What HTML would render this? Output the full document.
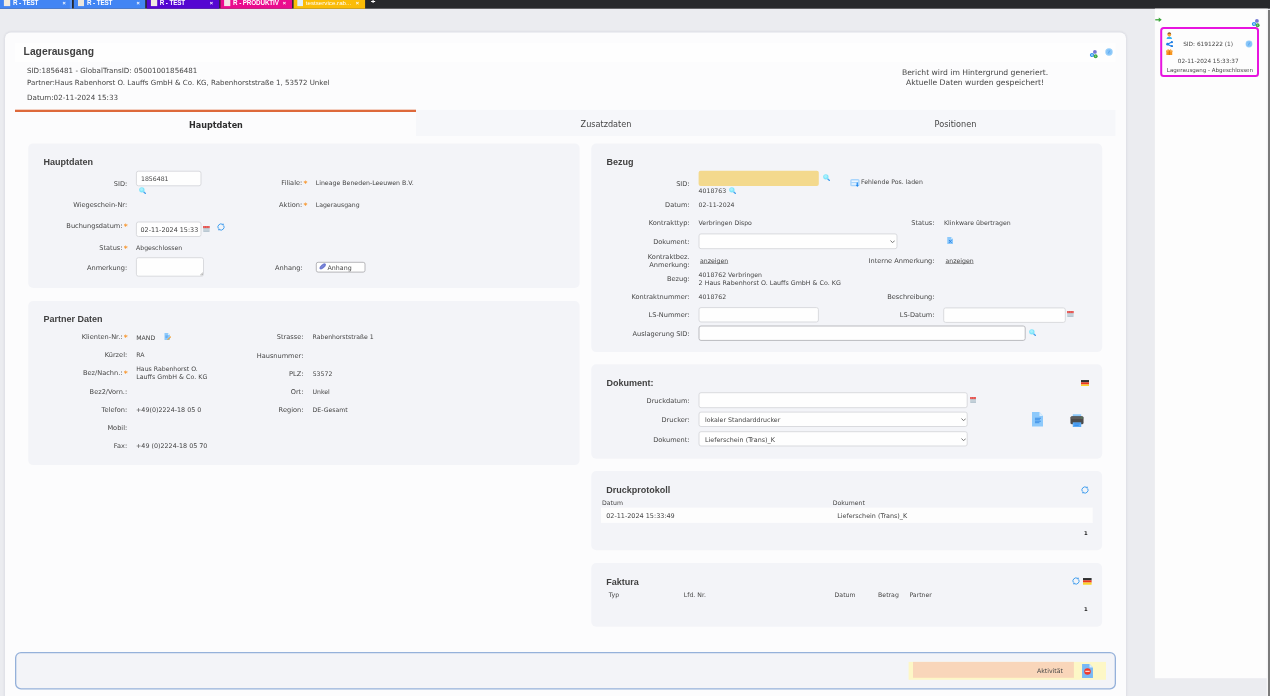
<!DOCTYPE html>
<html lang="de"><head><meta charset="utf-8"><title>Lagerausgang</title>
<style>
html,body{margin:0;padding:0;}
body{width:1270px;height:696px;overflow:hidden;background:#ebecf0;position:relative;font-family:'DejaVu Sans','Liberation Sans',sans-serif;color:#454545;}
#root{position:absolute;left:0;top:0;width:1270px;height:696px;overflow:hidden;will-change:transform;}
.a{position:absolute;display:block;}
.t{position:absolute;white-space:nowrap;line-height:12px;height:12px;}
.st{color:#f8962d;font-weight:bold;font-size:7.5px;line-height:0;margin-left:1.2px;position:relative;top:0.5px;}
u{text-decoration:underline;text-decoration-thickness:1px;text-underline-offset:0.3px;text-decoration-color:rgba(70,70,70,0.5);text-decoration-skip-ink:none;}
</style></head>
<body>
<div id="root">
<svg class="a" style="left:0;top:0" width="1270" height="696" viewBox="0 0 1270 696">
<rect x="0.00" y="0.00" width="1270.00" height="8.70" fill="#28292c"/>
<rect x="0.00" y="0.00" width="72.00" height="8.70" fill="#4285f4"/>
<rect x="3.90" y="0.00" width="6.30" height="6.10" fill="#f1ebe0"/>
<rect x="73.80" y="0.00" width="71.40" height="8.70" fill="#4285f4"/>
<rect x="78.00" y="0.00" width="6.00" height="6.10" fill="#ece6dc"/>
<rect x="146.80" y="0.00" width="72.40" height="8.70" fill="#5506d2"/>
<rect x="150.90" y="0.00" width="6.30" height="6.10" fill="#f1ebe0"/>
<rect x="220.50" y="0.00" width="71.60" height="8.70" fill="#ea0b8e"/>
<rect x="224.10" y="0.00" width="6.20" height="6.10" fill="#f3e3e6"/>
<rect x="293.60" y="0.00" width="71.50" height="8.70" fill="#fbbc07"/>
<rect x="297.30" y="0.00" width="5.70" height="6.10" fill="#dfeefc"/>
<rect x="69.80" y="0.00" width="2.20" height="8.70" fill="#5b95f6"/>
<rect x="1154.90" y="8.60" width="111.90" height="669.60" fill="#fdfdfd"/>
<rect x="1267.80" y="10.00" width="2.20" height="690.00" fill="#7b7b7b"/>
<rect x="1266.80" y="8.60" width="1.00" height="690.00" fill="#ffffff"/>
<rect x="1161.20" y="28.00" width="96.80" height="48.00" rx="2.50" fill="#fdfdfd" stroke="#e714df" stroke-width="2.0"/>
<rect x="2.60" y="30.00" width="1125.80" height="704.80" rx="8.40" fill="rgba(40,50,80,0.012)"/>
<rect x="3.40" y="30.80" width="1124.20" height="703.20" rx="7.60" fill="rgba(40,50,80,0.018)"/>
<rect x="4.20" y="31.60" width="1122.60" height="701.60" rx="6.80" fill="rgba(40,50,80,0.025)"/>
<rect x="5.00" y="32.40" width="1121.00" height="700.00" rx="6.00" fill="#fcfcfd"/>
<rect x="15.00" y="42.80" width="1100.40" height="19.00" fill="#fefefe"/>
<rect x="416.00" y="109.90" width="699.40" height="26.00" fill="#f6f7fa"/>
<rect x="15.00" y="109.70" width="401.00" height="2.30" fill="#de693b"/>
<rect x="28.20" y="143.40" width="551.40" height="144.60" rx="5.00" fill="#f3f4f8"/>
<rect x="136.40" y="171.20" width="64.60" height="14.60" rx="2.00" fill="#fefefe" stroke="#d9dade" stroke-width="1.0"/>
<rect x="136.40" y="222.00" width="64.60" height="14.50" rx="2.00" fill="#fefefe" stroke="#d9dade" stroke-width="1.0"/>
<rect x="136.40" y="257.70" width="67.10" height="18.50" rx="2.00" fill="#fefefe" stroke="#d9dade" stroke-width="1.0"/>
<rect x="316.30" y="262.30" width="48.70" height="9.80" rx="1.80" fill="#fefefe" stroke="#a6a6aa" stroke-width="0.8"/>
<rect x="28.20" y="301.10" width="551.40" height="164.00" rx="5.00" fill="#f3f4f8"/>
<rect x="591.30" y="143.50" width="510.90" height="208.60" rx="5.00" fill="#f3f4f8"/>
<rect x="698.60" y="170.70" width="120.20" height="15.40" rx="2.00" fill="#f3d98d"/>
<rect x="699.00" y="233.90" width="198.00" height="14.80" rx="2.00" fill="#fefefe" stroke="#d9dade" stroke-width="1.0"/>
<rect x="699.00" y="307.60" width="119.40" height="14.40" rx="2.00" fill="#fefefe" stroke="#d9dade" stroke-width="1.0"/>
<rect x="943.70" y="307.90" width="121.60" height="14.50" rx="2.00" fill="#fefefe" stroke="#d9dade" stroke-width="1.0"/>
<rect x="699.00" y="326.00" width="326.20" height="14.40" rx="2.00" fill="#fefefe" stroke="#b9babf" stroke-width="1.0"/>
<rect x="591.30" y="364.20" width="510.90" height="94.50" rx="5.00" fill="#f3f4f8"/>
<rect x="699.00" y="392.70" width="268.20" height="15.00" rx="2.00" fill="#fefefe" stroke="#d9dade" stroke-width="1.0"/>
<rect x="699.00" y="412.10" width="268.20" height="14.40" rx="2.00" fill="#fefefe" stroke="#d9dade" stroke-width="1.0"/>
<rect x="699.00" y="431.70" width="268.20" height="14.30" rx="2.00" fill="#fefefe" stroke="#d9dade" stroke-width="1.0"/>
<rect x="591.30" y="471.10" width="510.80" height="79.20" rx="5.00" fill="#f3f4f8"/>
<rect x="601.00" y="507.60" width="491.70" height="15.30" fill="#fdfdfd"/>
<rect x="591.30" y="563.00" width="510.80" height="63.80" rx="5.00" fill="#f3f4f8"/>
<rect x="15.65" y="652.55" width="1099.70" height="36.30" rx="5.35" fill="#f3f4f8" stroke="#95b1da" stroke-width="1.3"/>
<rect x="908.60" y="661.90" width="197.40" height="17.90" fill="#fdf7c6"/>
<rect x="913.00" y="661.90" width="160.90" height="15.90" fill="#f9d6ba"/>
</svg>
<div class="t" style="top:-3px;font-size:6.3px;font-family:'Liberation Sans','DejaVu Sans',sans-serif;font-weight:bold;color:#ffffff;letter-spacing:-0.12px;left:13.0px;">R - TEST</div>
<div class="t" style="top:-3px;font-size:5.6px;font-family:'Liberation Sans','DejaVu Sans',sans-serif;font-weight:bold;color:#ffffff;left:62.6px;">×</div>
<div class="t" style="top:-3px;font-size:6.3px;font-family:'Liberation Sans','DejaVu Sans',sans-serif;font-weight:bold;color:#ffffff;letter-spacing:-0.12px;left:87.0px;">R - TEST</div>
<div class="t" style="top:-3px;font-size:5.6px;font-family:'Liberation Sans','DejaVu Sans',sans-serif;font-weight:bold;color:#ffffff;left:136.6px;">×</div>
<div class="t" style="top:-3px;font-size:6.3px;font-family:'Liberation Sans','DejaVu Sans',sans-serif;font-weight:bold;color:#ffffff;letter-spacing:-0.12px;left:159.8px;">R - TEST</div>
<div class="t" style="top:-3px;font-size:5.6px;font-family:'Liberation Sans','DejaVu Sans',sans-serif;font-weight:bold;color:#ffffff;left:209.8px;">×</div>
<div class="t" style="top:-3px;font-size:6.3px;font-family:'Liberation Sans','DejaVu Sans',sans-serif;font-weight:bold;color:#ffffff;letter-spacing:-0.12px;left:233.1px;">R - PRODUKTIV</div>
<div class="t" style="top:-3px;font-size:5.6px;font-family:'Liberation Sans','DejaVu Sans',sans-serif;font-weight:bold;color:#ffffff;left:282.79999999999995px;">×</div>
<div class="t" style="top:-3px;font-size:6.19px;font-family:'Liberation Sans','DejaVu Sans',sans-serif;color:#ffffff;left:305.8px;">testservice.rab...</div>
<div class="t" style="top:-3px;font-size:5.6px;font-family:'Liberation Sans','DejaVu Sans',sans-serif;font-weight:bold;color:#ffffff;left:355.79999999999995px;">×</div>
<div class="t" style="top:-4px;font-size:8px;font-family:'Liberation Sans','DejaVu Sans',sans-serif;font-weight:bold;color:#ffffff;left:370.8px;">+</div>
<svg class="a" style="left:1155.4px;top:16.6px" width="7" height="5.6" viewBox="0 0 14 11"><path d="M0.5 5.5H10" stroke="#3aa53a" stroke-width="2.6"/><path d="M7.5 1L13.5 5.5L7.5 10Z" fill="#3aa53a"/></svg>
<svg class="a" style="left:1250.6px;top:17.8px" width="9" height="10" viewBox="0 0 9 10"><circle cx="5.9" cy="2.9" r="1.9" fill="#7377d4"/><circle cx="3" cy="6" r="1.45" fill="none" stroke="#2f95f0" stroke-width="1.3"/><circle cx="6.6" cy="7.2" r="2" fill="#3fa846"/><circle cx="6.6" cy="7.2" r="0.6" fill="#9ad79c"/></svg>
<div class="t" style="top:38px;font-size:5.85px;color:#4a4a4a;left:908.1px;width:600px;text-align:center;">SID: 6191222 (1)</div>
<div class="t" style="top:55px;font-size:5.73px;color:#4a4a4a;left:908.2px;width:600px;text-align:center;">02-11-2024 15:33:37</div>
<div class="t" style="top:64px;font-size:5.54px;color:#4a4a4a;left:909.9px;width:600px;text-align:center;">Lagerausgang - Abgeschlossen</div>
<svg class="a" style="left:1245.1px;top:39.9px" width="8" height="8" viewBox="0 0 8 8"><circle cx="4" cy="4" r="3.4" fill="#96cefa"/><circle cx="4" cy="4" r="2.1" fill="none" stroke="#6fb6f5" stroke-width="0.6"/><path d="M4 1.8L4.8 4.3L3.7 4.3Z M4 6.2L3.2 3.7L4.3 3.7Z" fill="#3d97ec"/></svg>
<svg class="a" style="left:1166px;top:32px" width="7" height="7" viewBox="0 0 7 7"><path d="M0.5 6.9Q0.6 4.6 3.3 4.5Q6 4.6 6.1 6.9Z" fill="#38b3f4"/><circle cx="3.3" cy="2.5" r="1.85" fill="#f6a62c"/><path d="M1.4 2.3Q1.5 0.3 3.3 0.3Q5.1 0.3 5.2 2.3Q3.3 1.2 1.4 2.3Z" fill="#8a5a2c"/><path d="M2.6 4.4L3.3 5.3L4 4.4Z" fill="#f6a62c"/></svg>
<svg class="a" style="left:1166px;top:41px" width="7.4" height="6.4" viewBox="0 0 15 13"><path d="M3 6.5L12 2M3 6.5L12 11" stroke="#1f7fe5" stroke-width="2.2"/><circle cx="3.2" cy="6.5" r="2.9" fill="#1f7fe5"/><circle cx="12" cy="2.4" r="2.3" fill="#1f7fe5"/><circle cx="12" cy="10.6" r="2.3" fill="#1f7fe5"/></svg>
<svg class="a" style="left:1166.3px;top:48.8px" width="6.6" height="6.4" viewBox="0 0 13 13"><rect x="0.5" y="3.4" width="12" height="9.4" fill="#f7941d"/><rect x="0" y="3" width="13" height="3" fill="#f9a63a"/><rect x="5.4" y="3" width="2.2" height="10" fill="#d9730b"/><path d="M6.5 3Q3 -1 2.6 2.4ZM6.5 3Q10 -1 10.4 2.4Z" stroke="#f7941d" stroke-width="1.2" fill="none"/></svg>
<div class="t" style="top:46px;font-size:10.3px;font-family:'Liberation Sans','DejaVu Sans',sans-serif;font-weight:bold;color:#414141;left:23.6px;">Lagerausgang</div>
<div class="t" style="top:65px;font-size:7.12px;left:27px;">SID:1856481 - GlobalTransID: 05001001856481</div>
<div class="t" style="top:77px;font-size:7.05px;left:27px;">Partner:Haus Rabenhorst O. Lauffs GmbH &amp; Co. KG, Rabenhorststraße 1, 53572 Unkel</div>
<div class="t" style="top:92px;font-size:7.17px;left:27px;">Datum:02-11-2024 15:33</div>
<div class="t" style="top:67px;font-size:7.65px;left:675.1px;width:600px;text-align:center;">Bericht wird im Hintergrund generiert.</div>
<div class="t" style="top:77px;font-size:7.65px;left:675.1px;width:600px;text-align:center;">Aktuelle Daten wurden gespeichert!</div>
<svg class="a" style="left:1089px;top:48.65px" width="9" height="10" viewBox="0 0 9 10"><circle cx="5.9" cy="2.9" r="1.9" fill="#7377d4"/><circle cx="3" cy="6" r="1.45" fill="none" stroke="#2f95f0" stroke-width="1.3"/><circle cx="6.6" cy="7.2" r="2" fill="#3fa846"/><circle cx="6.6" cy="7.2" r="0.6" fill="#9ad79c"/></svg>
<svg class="a" style="left:1104.6px;top:48px" width="8" height="8" viewBox="0 0 8 8"><circle cx="4" cy="4" r="3.7" fill="#96cefa"/><circle cx="4" cy="4" r="2.1" fill="none" stroke="#6fb6f5" stroke-width="0.6"/><path d="M4 1.8L4.8 4.3L3.7 4.3Z M4 6.2L3.2 3.7L4.3 3.7Z" fill="#3d97ec"/></svg>
<div class="t" style="top:119px;font-size:8.08px;font-weight:bold;color:#2e2e2e;left:-84.1px;width:600px;text-align:center;">Hauptdaten</div>
<div class="t" style="top:118px;font-size:8.13px;left:306px;width:600px;text-align:center;">Zusatzdaten</div>
<div class="t" style="top:118px;font-size:8.13px;left:655.5px;width:600px;text-align:center;">Positionen</div>
<div class="t" style="top:156px;font-size:9px;font-family:'Liberation Sans','DejaVu Sans',sans-serif;font-weight:bold;color:#414141;left:43.6px;">Hauptdaten</div>
<div class="t" style="top:178px;font-size:6.6px;right:1142.8px;">SID:</div>
<div class="t" style="top:173px;font-size:6.2px;left:141px;">1856481</div>
<svg class="a" style="left:138.8px;top:187.05px" width="7.2" height="7.2" viewBox="0 0 7.2 7.2"><path d="M4.6 4.8L6.5 6.6" stroke="#4aa3ee" stroke-width="1.3" stroke-linecap="round"/><circle cx="2.85" cy="2.85" r="2.7" fill="#80e5fb"/><circle cx="2.6" cy="2.6" r="1.5" fill="#a8effd"/></svg>
<div class="t" style="top:199px;font-size:6.6px;right:1142.8px;">Wiegeschein-Nr:</div>
<div class="t" style="top:220px;font-size:6.6px;right:1142.4px;">Buchungsdatum:<b class="st">*</b></div>
<div class="t" style="top:224px;font-size:6.42px;left:140.5px;">02-11-2024 15:33</div>
<svg class="a" style="left:203.15px;top:225.65px" width="6.8" height="6" viewBox="0 0 6.8 6"><rect x="0.1" y="0" width="6.6" height="2.3" fill="#e4504c"/><rect x="0.3" y="2.3" width="6.2" height="3.6" fill="#b0c0cb"/><path d="M0.3 3.5H6.5M0.3 4.7H6.5" stroke="#d9e2e8" stroke-width="0.55"/><path d="M1.6 0.5V1.5M3.4 0.5V1.5M5.2 0.5V1.5" stroke="#f3a3a0" stroke-width="0.6"/></svg>
<svg class="a" style="left:216.9px;top:223.15px" width="8" height="8" viewBox="0 0 8 8"><path d="M1.32 5.55A3.1 3.1 0 0 1 5.55 1.32" fill="none" stroke="#3f9ff0" stroke-width="1"/><path d="M6.68 2.45A3.1 3.1 0 0 1 2.45 6.68" fill="none" stroke="#3f9ff0" stroke-width="1"/><path d="M6.9 2.1L6.1 0.3L4.9 2.3Z" fill="#2f8fe8"/><path d="M1.1 5.9L1.9 7.7L3.1 5.7Z" fill="#2f8fe8"/></svg>
<div class="t" style="top:242px;font-size:6.6px;right:1142.4px;">Status:<b class="st">*</b></div>
<div class="t" style="top:242px;font-size:6.2px;left:136px;">Abgeschlossen</div>
<div class="t" style="top:262px;font-size:6.6px;right:1142.8px;">Anmerkung:</div>
<svg class="a" style="left:199.9px;top:272.4px" width="3.6" height="3.6" viewBox="0 0 7 7"><path d="M6.5 0.5L0.5 6.5M6.5 3.6L3.6 6.5" stroke="#6f6f6f" stroke-width="1.1"/></svg>
<div class="t" style="top:177px;font-size:6.6px;right:962.6px;">Filiale:<b class="st">*</b></div>
<div class="t" style="top:177px;font-size:6.24px;left:315.7px;">Lineage Beneden-Leeuwen B.V.</div>
<div class="t" style="top:199px;font-size:6.6px;right:962.6px;">Aktion:<b class="st">*</b></div>
<div class="t" style="top:199px;font-size:6.2px;left:315.7px;">Lagerausgang</div>
<div class="t" style="top:262px;font-size:6.6px;right:967.4px;">Anhang:</div>
<svg class="a" style="left:318.8px;top:263.4px" width="7.4" height="6.8" viewBox="0 0 7.4 6.8"><ellipse cx="3.7" cy="3.4" rx="3.9" ry="1.9" transform="rotate(-42 3.7 3.4)" fill="#6e7ad2"/><path d="M2.2 4.6L5 2.2" stroke="#98a1e2" stroke-width="0.5"/></svg>
<div class="t" style="top:262px;font-size:6.3px;left:327.5px;">Anhang</div>
<div class="t" style="top:313px;font-size:9px;font-family:'Liberation Sans','DejaVu Sans',sans-serif;font-weight:bold;color:#414141;left:43.5px;">Partner Daten</div>
<div class="t" style="top:331px;font-size:6.6px;right:1142.4px;">Klienten-Nr.:<b class="st">*</b></div>
<div class="t" style="top:332px;font-size:6.2px;left:136.2px;">MAND</div>
<div class="t" style="top:349px;font-size:6.6px;right:1142.8px;">Kürzel:</div>
<div class="t" style="top:349px;font-size:6.2px;left:136.2px;">RA</div>
<div class="t" style="top:367px;font-size:6.6px;right:1142.4px;">Bez/Nachn.:<b class="st">*</b></div>
<div class="t" style="top:363px;font-size:6.2px;left:136.2px;">Haus Rabenhorst O.</div>
<div class="t" style="top:371px;font-size:6.34px;left:136.2px;">Lauffs GmbH &amp; Co. KG</div>
<div class="t" style="top:386px;font-size:6.6px;right:1142.8px;">Bez2/Vorn.:</div>
<div class="t" style="top:404px;font-size:6.6px;right:1142.8px;">Telefon:</div>
<div class="t" style="top:404px;font-size:6.39px;left:136px;">+49(0)2224-18 05 0</div>
<div class="t" style="top:422px;font-size:6.6px;right:1142.8px;">Mobil:</div>
<div class="t" style="top:440px;font-size:6.6px;right:1142.8px;">Fax:</div>
<div class="t" style="top:440px;font-size:6.39px;left:136px;">+49 (0)2224-18 05 70</div>
<div class="t" style="top:331px;font-size:6.6px;right:966.6px;">Strasse:</div>
<div class="t" style="top:331px;font-size:6.2px;left:312.5px;">Rabenhorststraße 1</div>
<div class="t" style="top:350px;font-size:6.6px;right:966.6px;">Hausnummer:</div>
<div class="t" style="top:368px;font-size:6.6px;right:966.6px;">PLZ:</div>
<div class="t" style="top:368px;font-size:6.2px;left:312.7px;">53572</div>
<div class="t" style="top:386px;font-size:6.6px;right:966.6px;">Ort:</div>
<div class="t" style="top:386px;font-size:6.2px;left:312.5px;">Unkel</div>
<div class="t" style="top:404px;font-size:6.6px;right:966.6px;">Region:</div>
<div class="t" style="top:404px;font-size:6.2px;left:312.5px;">DE-Gesamt</div>
<svg class="a" style="left:164px;top:332.6px" width="7.4" height="7.6" viewBox="0 0 15 15"><path d="M1 0H8L12 4V15H1Z" fill="#8dc9fb"/><path d="M8 0L12 4H8Z" fill="#d6ecfd"/><path d="M7 12.5L13.4 6.2L15 7.8L8.6 14L6.6 14.4Z" fill="#f2a33a"/><path d="M3 6H8M3 8.5H7" stroke="#3d8fe6" stroke-width="1.2"/></svg>
<div class="t" style="top:156px;font-size:9px;font-family:'Liberation Sans','DejaVu Sans',sans-serif;font-weight:bold;color:#414141;left:606.4px;">Bezug</div>
<div class="t" style="top:178px;font-size:6.6px;right:580.4px;">SID:</div>
<svg class="a" style="left:823px;top:174.1px" width="7.2" height="7.2" viewBox="0 0 7.2 7.2"><path d="M4.6 4.8L6.5 6.6" stroke="#4aa3ee" stroke-width="1.3" stroke-linecap="round"/><circle cx="2.85" cy="2.85" r="2.7" fill="#80e5fb"/><circle cx="2.6" cy="2.6" r="1.5" fill="#a8effd"/></svg>
<svg class="a" style="left:850.2px;top:178.6px" width="10" height="8.2" viewBox="0 0 10 8.2"><rect x="0.2" y="0.1" width="9.4" height="7.2" rx="1.6" fill="#a9d5fc"/><rect x="1.6" y="1.5" width="6.6" height="1.4" fill="#f4faff"/><rect x="1.6" y="4.3" width="4.6" height="1.4" fill="#f4faff"/><path d="M7.3 3.6V6.8" stroke="#1f86ee" stroke-width="1.1"/><path d="M5.9 6.1H8.7L7.3 8Z" fill="#1f86ee"/></svg>
<div class="t" style="top:176px;font-size:6.19px;left:861.1px;">Fehlende Pos. laden</div>
<div class="t" style="top:185px;font-size:6.2px;left:698.6px;">4018763</div>
<svg class="a" style="left:728.9px;top:187.2px" width="7.2" height="7.2" viewBox="0 0 7.2 7.2"><path d="M4.6 4.8L6.5 6.6" stroke="#4aa3ee" stroke-width="1.3" stroke-linecap="round"/><circle cx="2.85" cy="2.85" r="2.7" fill="#80e5fb"/><circle cx="2.6" cy="2.6" r="1.5" fill="#a8effd"/></svg>
<div class="t" style="top:199px;font-size:6.6px;right:580.4px;">Datum:</div>
<div class="t" style="top:199px;font-size:6.2px;left:698.6px;">02-11-2024</div>
<div class="t" style="top:217px;font-size:6.6px;right:580.4px;">Kontrakttyp:</div>
<div class="t" style="top:217px;font-size:6.2px;left:698.6px;">Verbringen Dispo</div>
<div class="t" style="top:217px;font-size:6.6px;right:335.5px;">Status:</div>
<div class="t" style="top:217px;font-size:6.19px;left:944px;">Klinkware übertragen</div>
<div class="t" style="top:236px;font-size:6.6px;right:580.4px;">Dokument:</div>
<svg class="a" style="left:889.9px;top:239.9px" width="5.2" height="3.4" viewBox="0 0 5.2 3.4"><path d="M0.5 0.6L2.6 2.7L4.7 0.6" fill="none" stroke="#6a6a6a" stroke-width="0.95"/></svg>
<svg class="a" style="left:946.8px;top:237px" width="6.4" height="7.4" viewBox="0 0 13 15"><path d="M0.5 0H8.5L12.5 4V15H0.5Z" fill="#8dc9fb"/><path d="M8.5 0L12.5 4H8.5Z" fill="#d6ecfd"/><path d="M4 6L9.4 12M9.4 6L4 12" stroke="#2f86e4" stroke-width="2"/></svg>
<div class="t" style="top:251px;font-size:6.6px;right:580.4px;">Kontraktbez.</div>
<div class="t" style="top:259px;font-size:6.6px;right:580.4px;">Anmerkung:</div>
<div class="t" style="top:255px;font-size:6.2px;left:700px;"><u>anzeigen</u></div>
<div class="t" style="top:255px;font-size:6.6px;right:335.5px;">Interne Anmerkung:</div>
<div class="t" style="top:255px;font-size:6.2px;left:945.5px;"><u>anzeigen</u></div>
<div class="t" style="top:273px;font-size:6.6px;right:580.4px;">Bezug:</div>
<div class="t" style="top:269px;font-size:6.2px;left:698.6px;">4018762 Verbringen</div>
<div class="t" style="top:277px;font-size:6.34px;left:698.6px;">2 Haus Rabenhorst O. Lauffs GmbH &amp; Co. KG</div>
<div class="t" style="top:291px;font-size:6.6px;right:580.4px;">Kontraktnummer:</div>
<div class="t" style="top:291px;font-size:6.2px;left:698.6px;">4018762</div>
<div class="t" style="top:291px;font-size:6.6px;right:335.5px;">Beschreibung:</div>
<div class="t" style="top:309px;font-size:6.6px;right:580.4px;">LS-Nummer:</div>
<div class="t" style="top:309px;font-size:6.6px;right:335.5px;">LS-Datum:</div>
<svg class="a" style="left:1067.3px;top:311.4px" width="6.8" height="6" viewBox="0 0 6.8 6"><rect x="0.1" y="0" width="6.6" height="2.3" fill="#e4504c"/><rect x="0.3" y="2.3" width="6.2" height="3.6" fill="#b0c0cb"/><path d="M0.3 3.5H6.5M0.3 4.7H6.5" stroke="#d9e2e8" stroke-width="0.55"/><path d="M1.6 0.5V1.5M3.4 0.5V1.5M5.2 0.5V1.5" stroke="#f3a3a0" stroke-width="0.6"/></svg>
<div class="t" style="top:328px;font-size:6.6px;right:580.4px;">Auslagerung SID:</div>
<svg class="a" style="left:1028.5px;top:328.6px" width="7.2" height="7.2" viewBox="0 0 7.2 7.2"><path d="M4.6 4.8L6.5 6.6" stroke="#4aa3ee" stroke-width="1.3" stroke-linecap="round"/><circle cx="2.85" cy="2.85" r="2.7" fill="#80e5fb"/><circle cx="2.6" cy="2.6" r="1.5" fill="#a8effd"/></svg>
<div class="t" style="top:377px;font-size:9px;font-family:'Liberation Sans','DejaVu Sans',sans-serif;font-weight:bold;color:#414141;left:606.4px;">Dokument:</div>
<svg class="a" style="left:1080.6px;top:379.6px" width="8.6" height="6.8" viewBox="0 0 9 7"><rect width="9" height="2.4" fill="#2e2e2e"/><rect y="2.4" width="9" height="2.3" fill="#ec371d"/><rect y="4.7" width="9" height="2.3" fill="#fad52b"/></svg>
<div class="t" style="top:395px;font-size:6.6px;right:580.4px;">Druckdatum:</div>
<svg class="a" style="left:969.5px;top:396.5px" width="6.8" height="6" viewBox="0 0 6.8 6"><rect x="0.1" y="0" width="6.6" height="2.3" fill="#e4504c"/><rect x="0.3" y="2.3" width="6.2" height="3.6" fill="#b0c0cb"/><path d="M0.3 3.5H6.5M0.3 4.7H6.5" stroke="#d9e2e8" stroke-width="0.55"/><path d="M1.6 0.5V1.5M3.4 0.5V1.5M5.2 0.5V1.5" stroke="#f3a3a0" stroke-width="0.6"/></svg>
<div class="t" style="top:414px;font-size:6.6px;right:580.4px;">Drucker:</div>
<div class="t" style="top:414px;font-size:6.28px;left:704.9px;">lokaler Standarddrucker</div>
<svg class="a" style="left:960.9px;top:418.09999999999997px" width="5.2" height="3.4" viewBox="0 0 5.2 3.4"><path d="M0.5 0.6L2.6 2.7L4.7 0.6" fill="none" stroke="#6a6a6a" stroke-width="0.95"/></svg>
<div class="t" style="top:434px;font-size:6.6px;right:580.4px;">Dokument:</div>
<div class="t" style="top:434px;font-size:6.4px;left:704.9px;">Lieferschein (Trans)_K</div>
<svg class="a" style="left:960.9px;top:437.7px" width="5.2" height="3.4" viewBox="0 0 5.2 3.4"><path d="M0.5 0.6L2.6 2.7L4.7 0.6" fill="none" stroke="#6a6a6a" stroke-width="0.95"/></svg>
<svg class="a" style="left:1031.9px;top:412.2px" width="11.4" height="14.5" viewBox="0 0 23 29"><path d="M0 0H15L23 8V29H0Z" fill="#8dc9fb"/><path d="M15 0L23 8H15Z" fill="#dbeefe"/><path d="M6 12.5H18M6 15.5H16M6 18.5H18M6 21.5H15" stroke="#3d8fe6" stroke-width="2"/></svg>
<svg class="a" style="left:1070.3px;top:413.5px" width="14" height="13.4" viewBox="0 0 28 27"><rect x="5.5" y="0.5" width="17" height="7" fill="#8dc9fb"/><rect x="0.8" y="4.6" width="26.4" height="16" rx="3.2" fill="#4b4b4b"/><rect x="1.2" y="5" width="25.6" height="5" rx="2.5" fill="#5c5c5c"/><circle cx="23.6" cy="7.8" r="1.1" fill="#39a845"/><rect x="5.5" y="16.8" width="17" height="9.8" fill="#5aaaf6"/><path d="M8.5 20H19.5M8.5 23H17.5" stroke="#2f86e4" stroke-width="1.6"/></svg>
<div class="t" style="top:484px;font-size:9px;font-family:'Liberation Sans','DejaVu Sans',sans-serif;font-weight:bold;color:#414141;left:606.2px;">Druckprotokoll</div>
<svg class="a" style="left:1080.6px;top:485.9px" width="8" height="8" viewBox="0 0 8 8"><path d="M1.32 5.55A3.1 3.1 0 0 1 5.55 1.32" fill="none" stroke="#3f9ff0" stroke-width="1"/><path d="M6.68 2.45A3.1 3.1 0 0 1 2.45 6.68" fill="none" stroke="#3f9ff0" stroke-width="1"/><path d="M6.9 2.1L6.1 0.3L4.9 2.3Z" fill="#2f8fe8"/><path d="M1.1 5.9L1.9 7.7L3.1 5.7Z" fill="#2f8fe8"/></svg>
<div class="t" style="top:497px;font-size:6.2px;left:602px;">Datum</div>
<div class="t" style="top:497px;font-size:6.2px;left:832.8px;">Dokument</div>
<div class="t" style="top:510px;font-size:6.46px;left:606.2px;">02-11-2024 15:33:49</div>
<div class="t" style="top:510px;font-size:6.4px;left:837.2px;">Lieferschein (Trans)_K</div>
<div class="t" style="top:527px;font-size:5.3px;font-weight:bold;color:#222;left:1084px;">1</div>
<div class="t" style="top:576px;font-size:9px;font-family:'Liberation Sans','DejaVu Sans',sans-serif;font-weight:bold;color:#414141;left:606.2px;">Faktura</div>
<svg class="a" style="left:1072.4px;top:577.1px" width="8" height="8" viewBox="0 0 8 8"><path d="M1.32 5.55A3.1 3.1 0 0 1 5.55 1.32" fill="none" stroke="#3f9ff0" stroke-width="1"/><path d="M6.68 2.45A3.1 3.1 0 0 1 2.45 6.68" fill="none" stroke="#3f9ff0" stroke-width="1"/><path d="M6.9 2.1L6.1 0.3L4.9 2.3Z" fill="#2f8fe8"/><path d="M1.1 5.9L1.9 7.7L3.1 5.7Z" fill="#2f8fe8"/></svg>
<svg class="a" style="left:1083.1px;top:578px" width="8.6" height="6.8" viewBox="0 0 9 7"><rect width="9" height="2.4" fill="#2e2e2e"/><rect y="2.4" width="9" height="2.3" fill="#ec371d"/><rect y="4.7" width="9" height="2.3" fill="#fad52b"/></svg>
<div class="t" style="top:589px;font-size:6.2px;left:608.8px;">Typ</div>
<div class="t" style="top:589px;font-size:6.2px;left:683.8px;">Lfd. Nr.</div>
<div class="t" style="top:589px;font-size:6.2px;left:834.6px;">Datum</div>
<div class="t" style="top:589px;font-size:6.2px;left:878.1px;">Betrag</div>
<div class="t" style="top:589px;font-size:6.2px;left:909.4px;">Partner</div>
<div class="t" style="top:603px;font-size:5.3px;font-weight:bold;color:#222;left:1084px;">1</div>
<div class="t" style="top:665px;font-size:6.19px;left:1037px;">Aktivität</div>
<svg class="a" style="left:1082.1px;top:663.7px" width="11" height="14.4" viewBox="0 0 22 29"><path d="M0 0H15L22 7V29H0Z" fill="#79b9f5"/><path d="M15 0L22 7H15Z" fill="#dbeefe"/><circle cx="11" cy="15" r="6.6" fill="#f0392b"/><rect x="6.6" y="13.6" width="8.8" height="2.6" fill="#fbd3cf"/></svg>
</div>
</body></html>
